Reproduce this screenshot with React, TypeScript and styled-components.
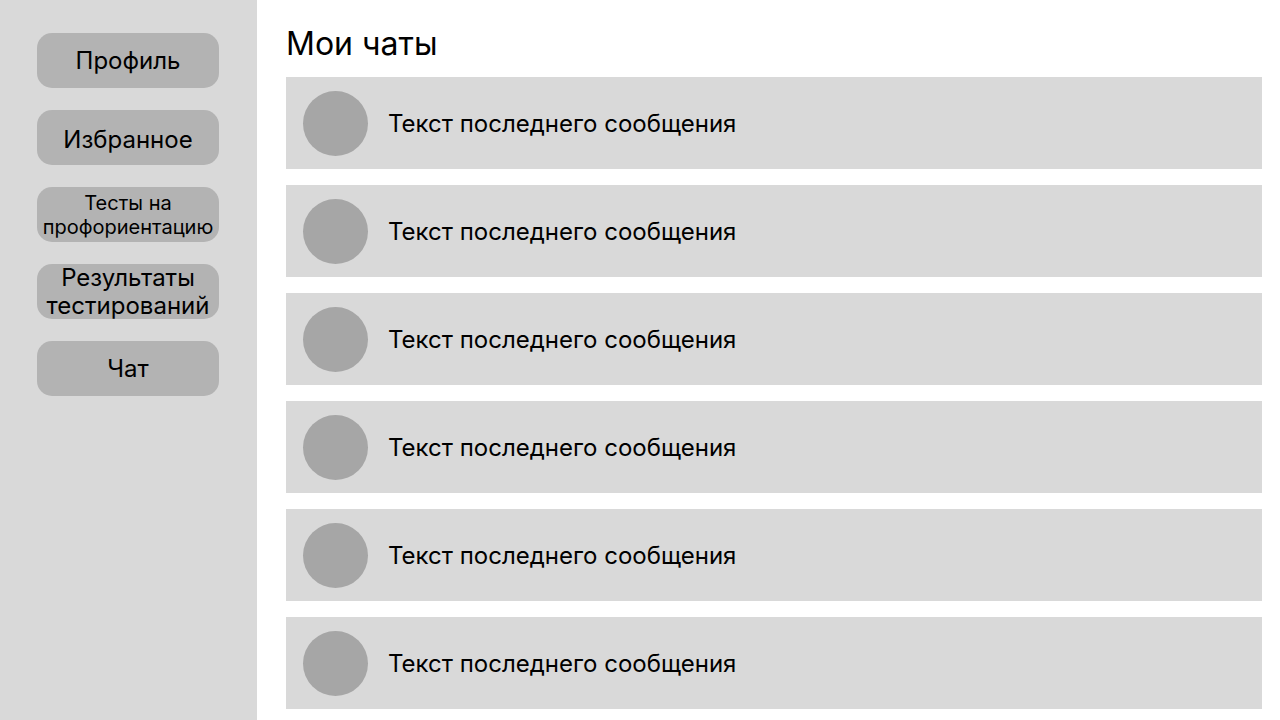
import React from "react";
import styled, { createGlobalStyle } from "styled-components";

const GlobalStyle = createGlobalStyle`
  html, body {
    margin: 0;
    padding: 0;
    background: #ffffff;
  }
  body {
    font-family: Inter, sans-serif;
    font-weight: 400;
    color: #000;
  }
`;

const Page = styled.div`
  display: flex;
  width: 1280px;
  height: 720px;
  overflow: hidden;
`;

const Sidebar = styled.nav`
  width: 257px;
  flex-shrink: 0;
  background: #d9d9d9;
  display: flex;
  flex-direction: column;
  align-items: flex-start;
  padding: 33px 0 0 37px;
  gap: 22px;
  box-sizing: border-box;
`;

const NavButton = styled.button<{ $small?: boolean; $shift?: number }>`
  width: 182px;
  height: 55px;
  border: none;
  border-radius: 15px;
  background: #b3b3b3;
  font-family: inherit;
  font-weight: inherit;
  color: #000;
  font-size: ${(p) => (p.$small ? "20px" : "24px")};
  line-height: ${(p) => (p.$small ? "24px" : "28px")};
  padding: ${(p) => p.$shift ?? 0}px 0 0;
  display: flex;
  align-items: center;
  justify-content: center;
  text-align: center;
  cursor: pointer;
`;

const Main = styled.main`
  flex: 1;
  padding: 21px 18px 0 29px;
  box-sizing: border-box;
  display: flex;
  flex-direction: column;
`;

const Title = styled.h1`
  margin: 0 0 10px 0;
  font-size: 32px;
  line-height: 46px;
  font-weight: inherit;
`;

const ChatList = styled.div`
  display: flex;
  flex-direction: column;
  gap: 16px;
`;

const ChatRow = styled.div`
  height: 92px;
  background: #d9d9d9;
  display: flex;
  align-items: center;
  padding-left: 17px;
  gap: 20px;
  flex-shrink: 0;
`;

const Avatar = styled.div`
  width: 65px;
  height: 65px;
  border-radius: 50%;
  background: #a6a6a6;
  flex-shrink: 0;
`;

const Message = styled.span`
  font-size: 24px;
`;

const navItems = [
  { label: "Профиль" },
  { label: "Избранное", shift: 4 },
  { label: "Тесты на профориентацию", small: true },
  { label: "Результаты тестирований" },
  { label: "Чат" },
];

export default function App() {
  return (
    <>
      <GlobalStyle />
      <Page>
        <Sidebar>
          {navItems.map((item) => (
            <NavButton key={item.label} $small={item.small} $shift={item.shift}>
              {item.label}
            </NavButton>
          ))}
        </Sidebar>
        <Main>
          <Title>Мои чаты</Title>
          <ChatList>
            {Array.from({ length: 6 }).map((_, i) => (
              <ChatRow key={i}>
                <Avatar />
                <Message>Текст последнего сообщения</Message>
              </ChatRow>
            ))}
          </ChatList>
        </Main>
      </Page>
    </>
  );
}
